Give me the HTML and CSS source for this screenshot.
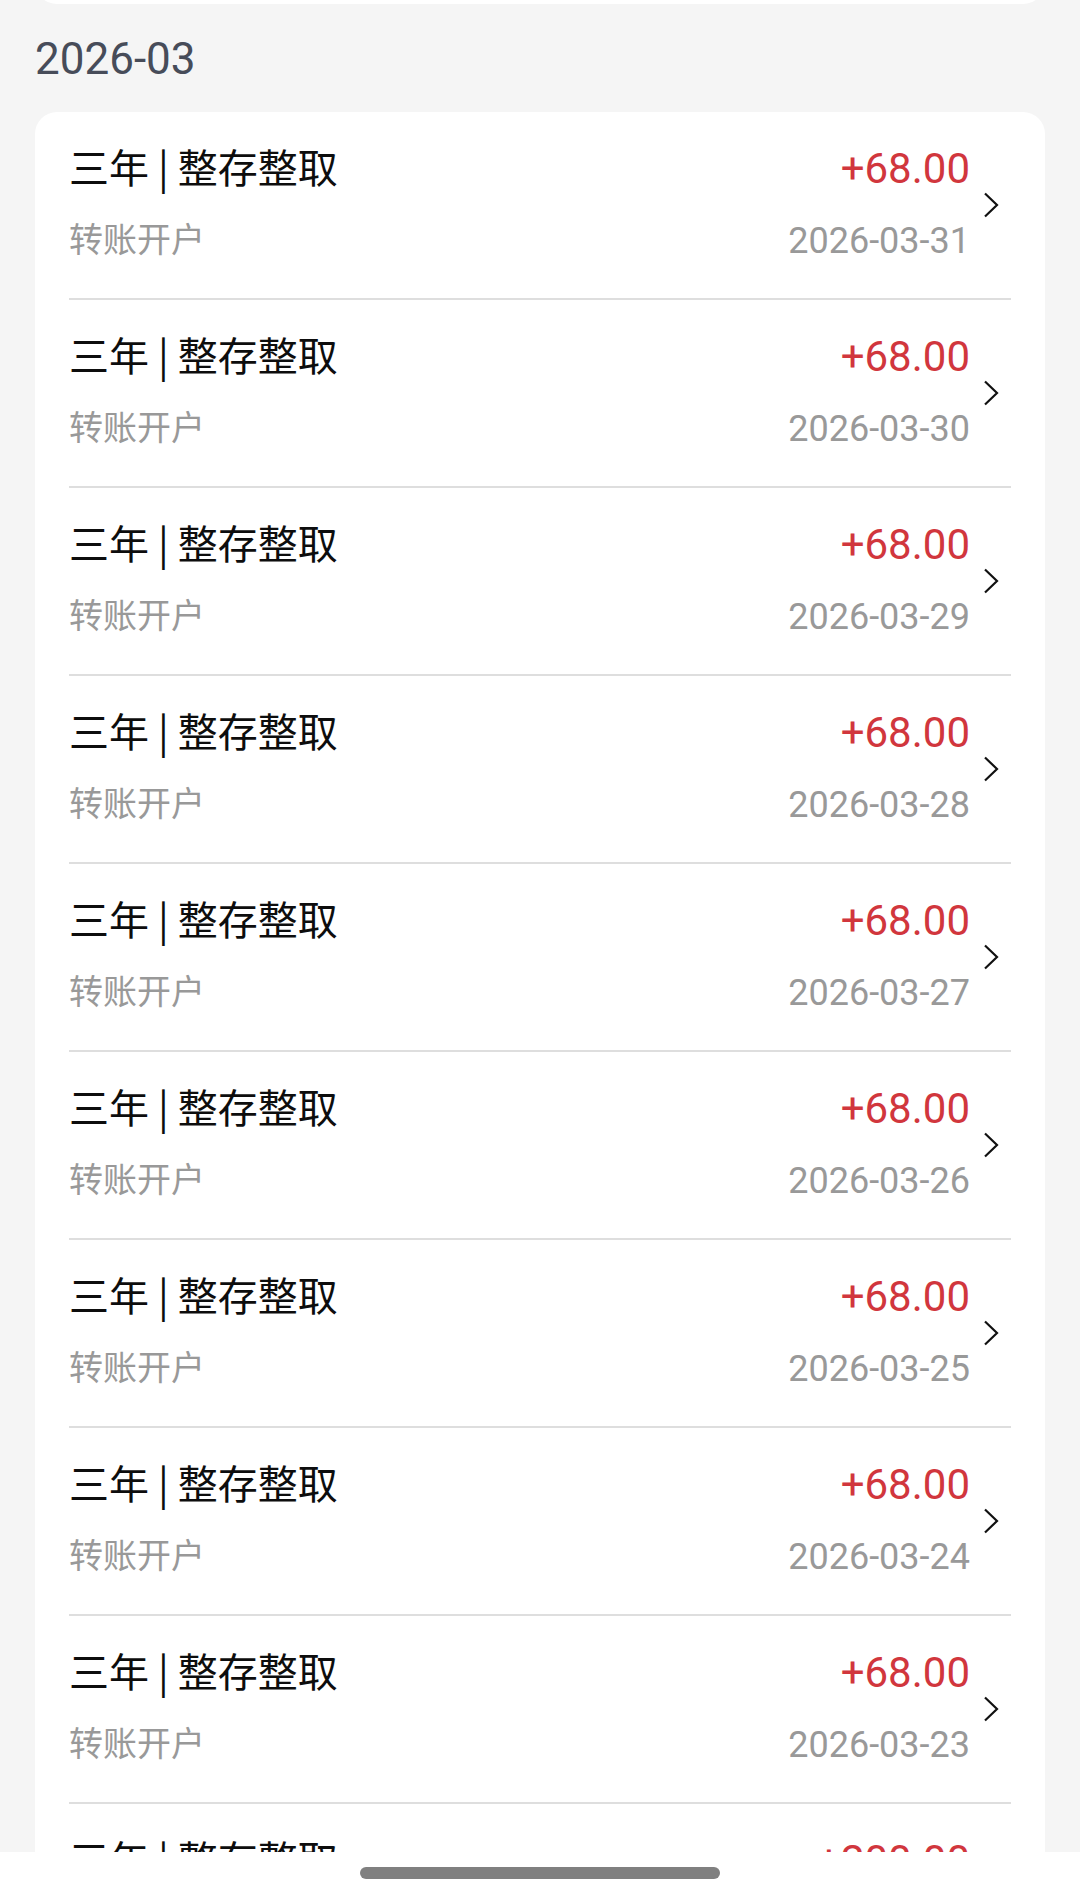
FILE: index.html
```html
<!DOCTYPE html>
<html lang="zh-CN">
<head>
    <meta charset="UTF-8">
    <meta name="viewport" content="width=device-width, initial-scale=1.0">
    <title>定期存款明细</title>
    <link rel="stylesheet" href="styles.css">
</head>
<body>
    <div class="page">
        <div class="prev-card"></div>

        <h2 class="month">2026-03</h2>

        <div class="record-card">
            <a class="record" href="#">
                <div class="record-info">
                    <div class="record-title">三年 | 整存整取</div>
                    <div class="record-sub">转账开户</div>
                </div>
                <div class="record-meta">
                    <div class="record-amount">+68.00</div>
                    <div class="record-date">2026-03-31</div>
                </div>
                <svg class="chevron" width="16" height="26" viewBox="0 0 16 26" fill="none" stroke="#111" stroke-width="2.2">
                    <polyline points="2,1.5 14,13 2,24.5"/>
                </svg>
            </a>
            <a class="record" href="#">
                <div class="record-info">
                    <div class="record-title">三年 | 整存整取</div>
                    <div class="record-sub">转账开户</div>
                </div>
                <div class="record-meta">
                    <div class="record-amount">+68.00</div>
                    <div class="record-date">2026-03-30</div>
                </div>
                <svg class="chevron" width="16" height="26" viewBox="0 0 16 26" fill="none" stroke="#111" stroke-width="2.2">
                    <polyline points="2,1.5 14,13 2,24.5"/>
                </svg>
            </a>
            <a class="record" href="#">
                <div class="record-info">
                    <div class="record-title">三年 | 整存整取</div>
                    <div class="record-sub">转账开户</div>
                </div>
                <div class="record-meta">
                    <div class="record-amount">+68.00</div>
                    <div class="record-date">2026-03-29</div>
                </div>
                <svg class="chevron" width="16" height="26" viewBox="0 0 16 26" fill="none" stroke="#111" stroke-width="2.2">
                    <polyline points="2,1.5 14,13 2,24.5"/>
                </svg>
            </a>
            <a class="record" href="#">
                <div class="record-info">
                    <div class="record-title">三年 | 整存整取</div>
                    <div class="record-sub">转账开户</div>
                </div>
                <div class="record-meta">
                    <div class="record-amount">+68.00</div>
                    <div class="record-date">2026-03-28</div>
                </div>
                <svg class="chevron" width="16" height="26" viewBox="0 0 16 26" fill="none" stroke="#111" stroke-width="2.2">
                    <polyline points="2,1.5 14,13 2,24.5"/>
                </svg>
            </a>
            <a class="record" href="#">
                <div class="record-info">
                    <div class="record-title">三年 | 整存整取</div>
                    <div class="record-sub">转账开户</div>
                </div>
                <div class="record-meta">
                    <div class="record-amount">+68.00</div>
                    <div class="record-date">2026-03-27</div>
                </div>
                <svg class="chevron" width="16" height="26" viewBox="0 0 16 26" fill="none" stroke="#111" stroke-width="2.2">
                    <polyline points="2,1.5 14,13 2,24.5"/>
                </svg>
            </a>
            <a class="record" href="#">
                <div class="record-info">
                    <div class="record-title">三年 | 整存整取</div>
                    <div class="record-sub">转账开户</div>
                </div>
                <div class="record-meta">
                    <div class="record-amount">+68.00</div>
                    <div class="record-date">2026-03-26</div>
                </div>
                <svg class="chevron" width="16" height="26" viewBox="0 0 16 26" fill="none" stroke="#111" stroke-width="2.2">
                    <polyline points="2,1.5 14,13 2,24.5"/>
                </svg>
            </a>
            <a class="record" href="#">
                <div class="record-info">
                    <div class="record-title">三年 | 整存整取</div>
                    <div class="record-sub">转账开户</div>
                </div>
                <div class="record-meta">
                    <div class="record-amount">+68.00</div>
                    <div class="record-date">2026-03-25</div>
                </div>
                <svg class="chevron" width="16" height="26" viewBox="0 0 16 26" fill="none" stroke="#111" stroke-width="2.2">
                    <polyline points="2,1.5 14,13 2,24.5"/>
                </svg>
            </a>
            <a class="record" href="#">
                <div class="record-info">
                    <div class="record-title">三年 | 整存整取</div>
                    <div class="record-sub">转账开户</div>
                </div>
                <div class="record-meta">
                    <div class="record-amount">+68.00</div>
                    <div class="record-date">2026-03-24</div>
                </div>
                <svg class="chevron" width="16" height="26" viewBox="0 0 16 26" fill="none" stroke="#111" stroke-width="2.2">
                    <polyline points="2,1.5 14,13 2,24.5"/>
                </svg>
            </a>
            <a class="record" href="#">
                <div class="record-info">
                    <div class="record-title">三年 | 整存整取</div>
                    <div class="record-sub">转账开户</div>
                </div>
                <div class="record-meta">
                    <div class="record-amount">+68.00</div>
                    <div class="record-date">2026-03-23</div>
                </div>
                <svg class="chevron" width="16" height="26" viewBox="0 0 16 26" fill="none" stroke="#111" stroke-width="2.2">
                    <polyline points="2,1.5 14,13 2,24.5"/>
                </svg>
            </a>
            <a class="record" href="#">
                <div class="record-info">
                    <div class="record-title">三年 | 整存整取</div>
                    <div class="record-sub">转账开户</div>
                </div>
                <div class="record-meta">
                    <div class="record-amount">+200.00</div>
                    <div class="record-date">2026-03-22</div>
                </div>
                <svg class="chevron" width="16" height="26" viewBox="0 0 16 26" fill="none" stroke="#111" stroke-width="2.2">
                    <polyline points="2,1.5 14,13 2,24.5"/>
                </svg>
            </a>
        </div>
    </div>

    <div class="home-bar">
        <div class="home-indicator"></div>
    </div>
</body>
</html>
```

FILE: styles.css
```css
* {
    margin: 0;
    padding: 0;
    box-sizing: border-box;
}

html,
body {
    height: 100%;
    overflow: hidden;
}

body {
    font-family: "Noto Sans CJK SC", "Noto Sans", sans-serif;
    background-color: #f5f5f5;
    color: #111;
}

.page {
    padding: 0 35px;
}

/* bottom edge of the card above, scrolled mostly out of view */
.prev-card {
    height: 30px;
    margin-top: -26px;
    background: #fff;
    border-radius: 0 0 22px 22px;
}

.month {
    margin: 25px 0 23px;
    font-family: Roboto, "Noto Sans", sans-serif;
    font-size: 44px;
    font-weight: 400;
    line-height: 60px;
    color: #474c59;
}

.record-card {
    background: #fff;
    border-radius: 22px;
    padding: 0 34px;
}

.record {
    display: flex;
    align-items: center;
    height: 188px;
    border-bottom: 2px solid #dedede;
    color: inherit;
    text-decoration: none;
}

.record-info {
    flex: 1;
    padding-bottom: 7px;
}

.record-title {
    font-size: 40px;
    line-height: 56px;
    color: #0d0d0d;
}

.record-sub {
    margin-top: 16px;
    font-size: 34px;
    line-height: 56px;
    color: #999;
}

.record-meta {
    text-align: right;
    font-family: Roboto, "Noto Sans", sans-serif;
}

.record-amount {
    font-size: 42px;
    line-height: 56px;
    color: #d1363d;
}

.record-date {
    margin-top: 16px;
    font-size: 36px;
    line-height: 56px;
    color: #999;
}

.chevron {
    flex-shrink: 0;
    margin-left: 13px;
    margin-right: 12px;
}

.home-bar {
    position: fixed;
    left: 0;
    right: 0;
    bottom: 0;
    height: 47px;
    background: #fff;
    display: flex;
    justify-content: center;
    padding-top: 15px;
}

.home-indicator {
    width: 360px;
    height: 12px;
    border-radius: 6px;
    background: #808080;
}
```
